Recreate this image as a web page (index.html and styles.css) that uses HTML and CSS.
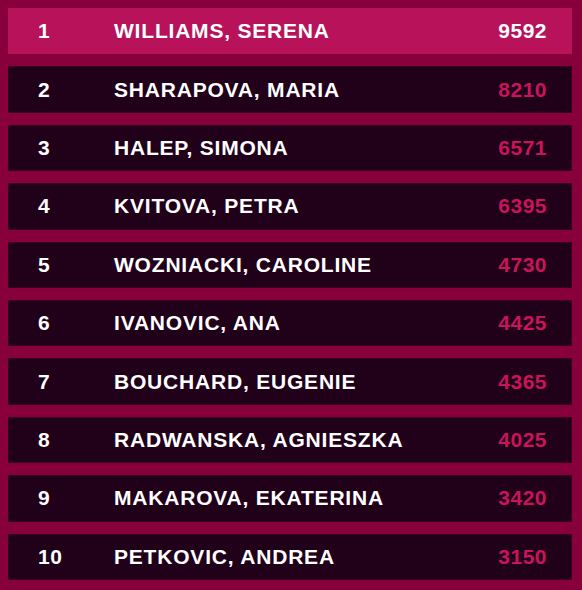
FILE: index.html
```html
<!DOCTYPE html>
<html>
<head>
<meta charset="utf-8">
<link rel="stylesheet" href="styles.css">
</head>
<body>
<div class="list">
  <div class="row top"><span class="rank">1</span><span class="name">WILLIAMS, SERENA</span><span class="pts">9592</span></div>
  <div class="row"><span class="rank">2</span><span class="name">SHARAPOVA, MARIA</span><span class="pts">8210</span></div>
  <div class="row"><span class="rank">3</span><span class="name">HALEP, SIMONA</span><span class="pts">6571</span></div>
  <div class="row"><span class="rank">4</span><span class="name">KVITOVA, PETRA</span><span class="pts">6395</span></div>
  <div class="row"><span class="rank">5</span><span class="name">WOZNIACKI, CAROLINE</span><span class="pts">4730</span></div>
  <div class="row"><span class="rank">6</span><span class="name">IVANOVIC, ANA</span><span class="pts">4425</span></div>
  <div class="row"><span class="rank">7</span><span class="name">BOUCHARD, EUGENIE</span><span class="pts">4365</span></div>
  <div class="row"><span class="rank">8</span><span class="name">RADWANSKA, AGNIESZKA</span><span class="pts">4025</span></div>
  <div class="row"><span class="rank">9</span><span class="name">MAKAROVA, EKATERINA</span><span class="pts">3420</span></div>
  <div class="row"><span class="rank">10</span><span class="name">PETKOVIC, ANDREA</span><span class="pts">3150</span></div>
</div>
</body>
</html>
```
FILE: styles.css
```css
html, body {
  margin: 0;
  padding: 0;
  background: #87003c;
}
body {
  width: 582px;
  height: 590px;
  overflow: hidden;
}
.list {
  display: flex;
  flex-direction: column;
  gap: 12px;
  padding: 8px 10px 0 8px;
}
.row {
  height: 46.4px;
  display: flex;
  align-items: center;
  background: #21001a;
  box-shadow: inset 0 0 0 1px #3a0022;
  font-family: "Liberation Sans", Arial, sans-serif;
  font-weight: bold;
  font-size: 21px;
  letter-spacing: 0.5px;
  color: #ffffff;
  box-sizing: border-box;
}
.row.top {
  background: #b8125a;
  box-shadow: none;
}
.rank {
  width: 106px;
  padding-left: 30px;
  box-sizing: border-box;
  flex: none;
}
.name {
  flex: 1;
  letter-spacing: 0.8px;
}
.pts {
  color: #c8155a;
  padding-right: 25px;
}
.row.top .pts {
  color: #ffffff;
}
```
